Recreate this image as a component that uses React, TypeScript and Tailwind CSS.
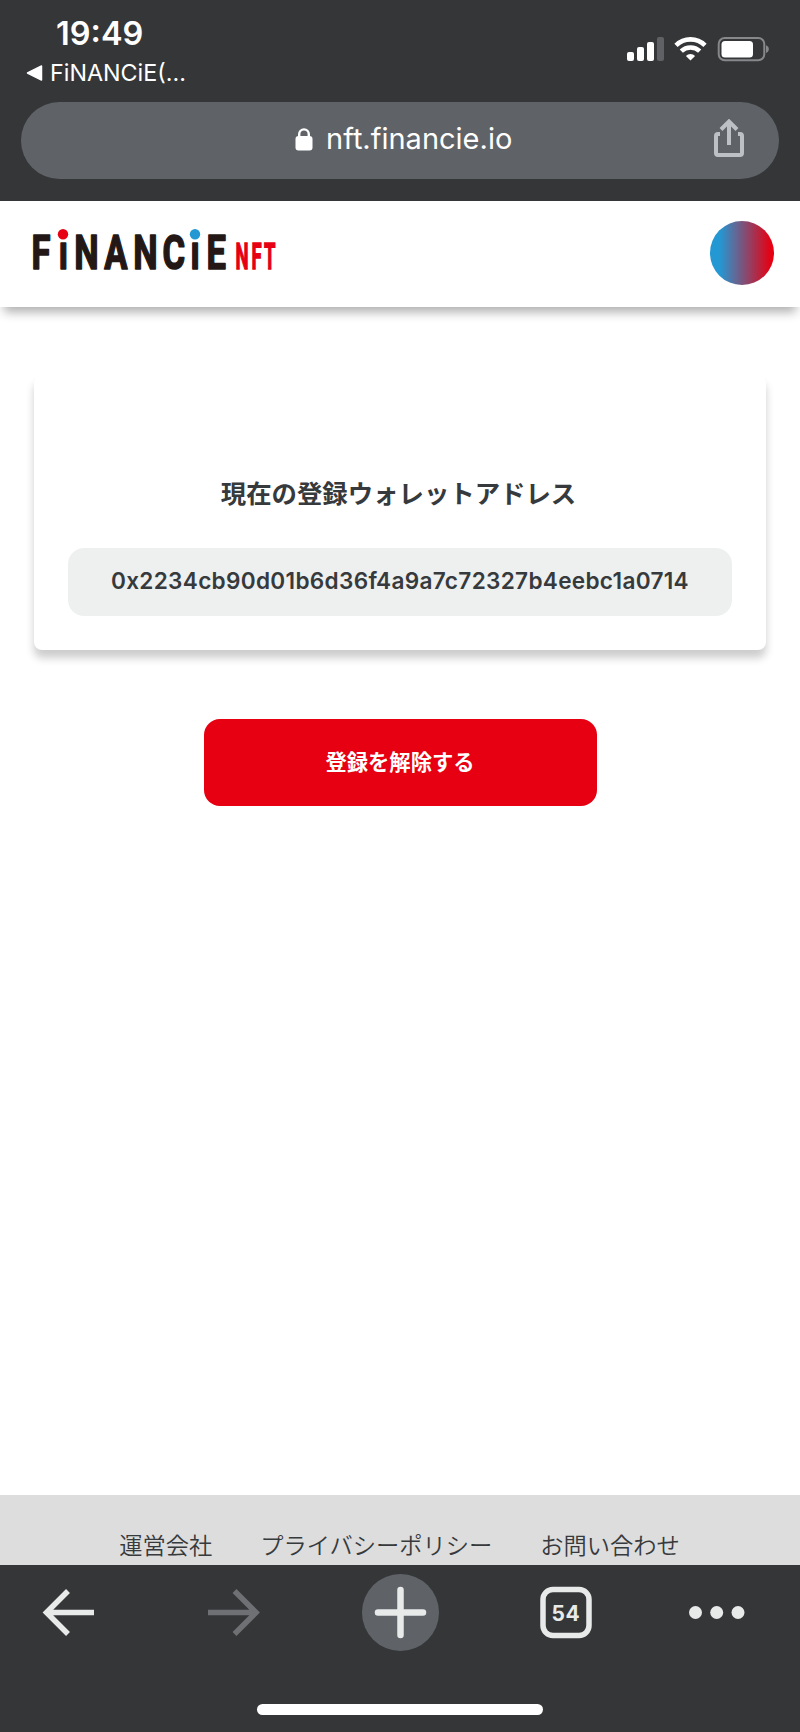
import React from 'react';

const address = '0x2234cb90d01b6d36f4a9a7c72327b4eebc1a0714';

function StatusIcons() {
  return (
    <svg width="144" height="26" viewBox="0 0 144 26" className="block">
      <rect x="0" y="15" width="7" height="9" rx="2" fill="#fff" />
      <rect x="10" y="10" width="7" height="14" rx="2" fill="#fff" />
      <rect x="20" y="5" width="7" height="19" rx="2" fill="#fff" />
      <rect x="30" y="0" width="7" height="24" rx="2" fill="#5f6164" />
      <g fill="none" stroke="#fff" strokeWidth="4.6">
        <path d="M49 8.4a20.5 20.5 0 0 1 29 0" />
        <path d="M54.3 14.2a13.2 13.2 0 0 1 18.4 0" />
      </g>
      <path d="M63.5 23.5l-4.6-4.6a6.6 6.6 0 0 1 9.2 0z" fill="#fff" />
      <rect x="91.7" y="1" width="45.6" height="22.2" rx="6" fill="none" stroke="#87888a" strokeWidth="2" />
      <rect x="94.5" y="4" width="31.5" height="16.5" rx="3.5" fill="#fff" />
      <path d="M139 8.2c3.8 1.4 3.8 6.4 0 7.8z" fill="#87888a" />
    </svg>
  );
}

function StatusBar() {
  return (
    <div className="flex h-[102px] justify-between pl-[26px] pr-[29px]">
      <div className="pt-[13px] text-white">
        <div className="pl-[30px] text-[32.5px] leading-[42px] font-semibold">19:49</div>
        <div className="flex items-center gap-[7px] text-[23.3px] leading-[36px]">
          <svg width="17" height="16" viewBox="0 0 17 16">
            <path d="M15.5 1v14L1.5 8z" fill="#fff" stroke="#fff" strokeWidth="1.5" strokeLinejoin="round" />
          </svg>
          <span>FiNANCiE(...</span>
        </div>
      </div>
      <div className="pt-[37px]">
        <StatusIcons />
      </div>
    </div>
  );
}

function AddressBar() {
  return (
    <div className="mx-[21px] flex h-[77px] items-center rounded-full bg-[#5f6368] pr-[34px] pb-[4px]">
      <div className="flex flex-1 items-center pl-[274px] text-white">
        <svg width="18" height="23" viewBox="0 0 18 23" className="mt-[2px]">
          <path d="M4.2 9V6.2a4.8 4.8 0 0 1 9.6 0V9" fill="none" stroke="#fff" strokeWidth="2.4" />
          <rect x="0.5" y="8" width="17" height="14.5" rx="3" fill="#fff" />
        </svg>
        <span className="ml-[13px] text-[29px] leading-[40px] [font-variant-ligatures:none]">nft.financie.io</span>
      </div>
      <svg width="32" height="40" viewBox="0 0 32 40" fill="none" stroke="#bdc1c6" strokeWidth="4">
        <path d="M7 15H5a2 2 0 0 0-2 2v17a2 2 0 0 0 2 2h22a2 2 0 0 0 2-2V17a2 2 0 0 0-2-2h-2" />
        <path d="M16 26V2.500M8 10.500l8-8 8 8" />
      </svg>
    </div>
  );
}

function Logo() {
  return (
    <svg width="252" height="56" viewBox="0 0 252 56" className="block overflow-visible">
      <text
        transform="scale(0.72 1)"
        x="2 40 61.500 103 143.500 184 223 245"
        y="43"
        fontFamily="Roboto"
        fontWeight="700"
        fontSize="48"
        fill="#231815"
        stroke="#231815"
        strokeWidth="1.600"
        strokeLinejoin="round"
      >
        FiNANCiE
      </text>
      <rect x="25" y="3" width="16" height="12" fill="#fff" />
      <rect x="157" y="3" width="16" height="12" fill="#fff" />
      <circle cx="33" cy="8.300" r="5.200" fill="#e60012" />
      <circle cx="165" cy="8.300" r="5.200" fill="#2498d3" />
      <text
        transform="scale(0.5 1)"
        x="411 443 468"
        y="43"
        fontFamily="Roboto"
        fontWeight="700"
        fontSize="37"
        fill="#e60012"
        stroke="#e60012"
        strokeWidth="1.400"
      >
        NFT
      </text>
    </svg>
  );
}

function Header() {
  return (
    <header className="relative flex h-[106px] items-center justify-between bg-white pl-[30px] pr-[26px] shadow-[0_9px_10px_-4px_rgba(0,0,0,0.32)]">
      <Logo />
      <div className="mb-[2px] size-[64px] rounded-full bg-linear-to-r/srgb from-[#2498d3] from-15% to-[#e60012] to-95%" />
    </header>
  );
}

function BottomBar() {
  return (
    <nav className="h-[167px] bg-[#353638]">
      <div className="flex h-[95px] items-center">
        <svg width="800" height="95" viewBox="0 0 800 95" fill="none">
          <path d="M94 47.500H47M68 26L46.500 47.500l21.500 21.500" stroke="#e8eaea" strokeWidth="5.500" />
          <path d="M208 47.500h47M234.500 26l21.500 21.500-21.500 21.500" stroke="#6f7073" strokeWidth="5.500" />
          <circle cx="400.500" cy="47.500" r="38.500" fill="#5f6368" />
          <path d="M400.500 25v45M378 47.500h45" stroke="#e8eaea" strokeWidth="6.500" strokeLinecap="round" />
          <rect x="543" y="24.500" width="46" height="46" rx="10" stroke="#e8eaea" strokeWidth="5.500" />
          <text x="566" y="56" textAnchor="middle" fontFamily="Inter" fontWeight="700" fontSize="21" letterSpacing="0.800" fill="#e8eaea">
            54
          </text>
          <g fill="#e8eaea">
            <circle cx="695.500" cy="47.500" r="6.500" />
            <circle cx="716.700" cy="47.500" r="6.500" />
            <circle cx="738" cy="47.500" r="6.500" />
          </g>
        </svg>
      </div>
      <div className="mx-auto mt-[44px] h-[11px] w-[286px] rounded-full bg-white" />
    </nav>
  );
}

function App() {
  return (
    <div className="flex h-[1732px] w-[800px] flex-col overflow-hidden bg-white font-['Inter','Noto_Sans_CJK_JP',sans-serif] text-[#373a3c]">
      <div className="h-[201px] bg-[#353638]">
        <StatusBar />
        <AddressBar />
      </div>
      <Header />
      <main className="flex-1 px-[34px] pt-[68px]">
        <section className="flex h-[275px] flex-col rounded-lg bg-white px-[34px] pt-[101px] shadow-[0_8px_9px_rgba(0,0,0,0.2)]">
          <h1 className="pr-[3px] text-center text-[25.4px] leading-[36px] font-bold">現在の登録ウォレットアドレス</h1>
          <div className="mt-[36px] flex h-[68px] items-center justify-center rounded-2xl bg-[#eef0f0] pb-[2px] text-[22.6px] font-semibold tracking-[0.3px]">
            {address}
          </div>
        </section>
        <button className="mx-auto mt-[69px] flex h-[87px] w-[393px] items-center justify-center rounded-2xl bg-[#e60012] text-[21.3px] font-bold text-white">
          登録を解除する
        </button>
      </main>
      <footer className="flex h-[70px] justify-center gap-[48px] bg-[#ddd] pt-[34px] pr-[1px] text-[23.25px] leading-[34px] font-[350]">
        <a>運営会社</a>
        <a>プライバシーポリシー</a>
        <a>お問い合わせ</a>
      </footer>
      <BottomBar />
    </div>
  );
}

export default App;
